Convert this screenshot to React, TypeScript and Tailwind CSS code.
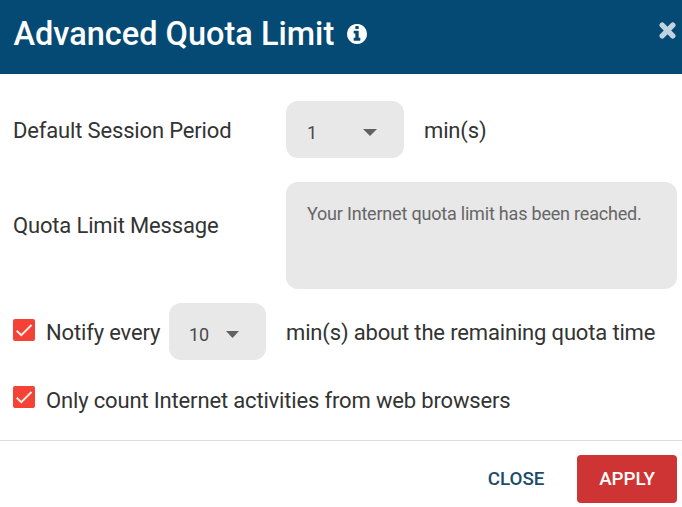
import React from "react";

function Caret({ className }: { className: string }) {
  return (
    <svg className={`h-[7px] ${className}`} viewBox="0 0 14 7" preserveAspectRatio="none" fill="#616161">
      <path d="M0 0h14L7 7z" />
    </svg>
  );
}

function Select({ value, className, caret }: { value: string; className: string; caret: string }) {
  return (
    <div className={`flex h-[57px] items-center justify-between rounded-xl bg-[#e8e8e8] pt-[5px] text-lg tracking-normal text-[#4a4a4a] ${className}`}>
      <span className="mt-0.5">{value}</span>
      <Caret className={caret} />
    </div>
  );
}

function Checkbox({ className }: { className: string }) {
  return (
    <svg className={`h-[22px] w-[22px] shrink-0 ${className}`} viewBox="0 0 22 22">
      <rect width="22" height="22" rx="2" fill="#f44336" />
      <path d="M3.7 11.7l4.6 4.5L18.5 6" fill="none" stroke="#fff0ec" strokeWidth="1.9" />
    </svg>
  );
}

function InfoIcon() {
  return (
    <svg className="mt-6 ml-3 h-5 w-5" viewBox="0 128 1536 1536" fill="currentColor">
      <path d="M1024 1376v-160q0-14-9-23t-23-9h-96v-512q0-14-9-23t-23-9h-320q-14 0-23 9t-9 23v160q0 14 9 23t23 9h96v320h-96q-14 0-23 9t-9 23v160q0 14 9 23t23 9h448q14 0 23-9t9-23zm-128-896v-160q0-14-9-23t-23-9h-192q-14 0-23 9t-9 23v160q0 14 9 23t23 9h192q14 0 23-9t9-23zm640 416q0 209-103 385.5t-279.5 279.5-385.5 103-385.5-103-279.5-279.5-103-385.5 103-385.5 279.5-279.5 385.5-103 385.5 103 279.5 279.5 103 385.5z" />
    </svg>
  );
}

export default function App() {
  return (
    <div className="h-[507px] w-[682px] overflow-hidden bg-white font-['Roboto',sans-serif] text-[22px] tracking-[-0.16px] whitespace-nowrap text-[#333]">
      <header className="flex h-[74px] items-start bg-[#054a75] pl-[13.5px] pr-[5px] text-white">
        <h1 className="mt-3.5 w-[321.5px] text-[32.5px] leading-10 font-medium tracking-normal">Advanced Quota Limit</h1>
        <InfoIcon />
        <svg className="mt-[21px] ml-auto h-[19px] w-[19px]" viewBox="0 0 19 19">
          <path d="M4.2 4.2l10.6 10.6M14.8 4.2L4.2 14.8" stroke="#bfd3e0" strokeWidth="5.4" strokeLinecap="round" />
        </svg>
      </header>
      <main className="h-[366px] pt-[27px] pl-[13px]">
        <div className="flex h-[57px] items-center">
          <span className="mt-0.5 w-[273px]">Default Session Period</span>
          <Select value="1" className="w-[118px] pl-[21px] pr-[27px]" caret="w-3.5" />
          <span className="mt-0.5 ml-5">min(s)</span>
        </div>
        <div className="mt-6 flex h-[107px]">
          <span className="mt-[27px] w-[273px]">Quota Limit Message</span>
          <div className="w-[391px] rounded-xl bg-[#e8e8e8] pt-[18px] pl-[21px] text-lg tracking-[-0.2px] text-[#666]">Your Internet quota limit has been reached.</div>
        </div>
        <div className="mt-3.5 flex h-[57px] items-center">
          <Checkbox className="mt-4 self-start" />
          <span className="mt-0.5 ml-[11px] w-[123px]">Notify every</span>
          <Select value="10" className="w-[97px] pl-5 pr-[27px]" caret="w-[13px]" />
          <span className="mt-0.5 ml-5">min(s) about the remaining quota time</span>
        </div>
        <div className="mt-6 flex items-start">
          <Checkbox className="mt-0.5" />
          <span className="ml-[11px]">Only count Internet activities from web browsers</span>
        </div>
      </main>
      <footer className="flex h-[67px] items-start justify-end border-t border-[#ddd] pt-3.5 pr-[5px] text-[18.8px] font-medium tracking-normal">
        <button className="h-12 w-[122px] text-[#1d4c69]">CLOSE</button>
        <button className="h-12 w-[100px] rounded bg-[#cf3435] text-white">APPLY</button>
      </footer>
    </div>
  );
}
